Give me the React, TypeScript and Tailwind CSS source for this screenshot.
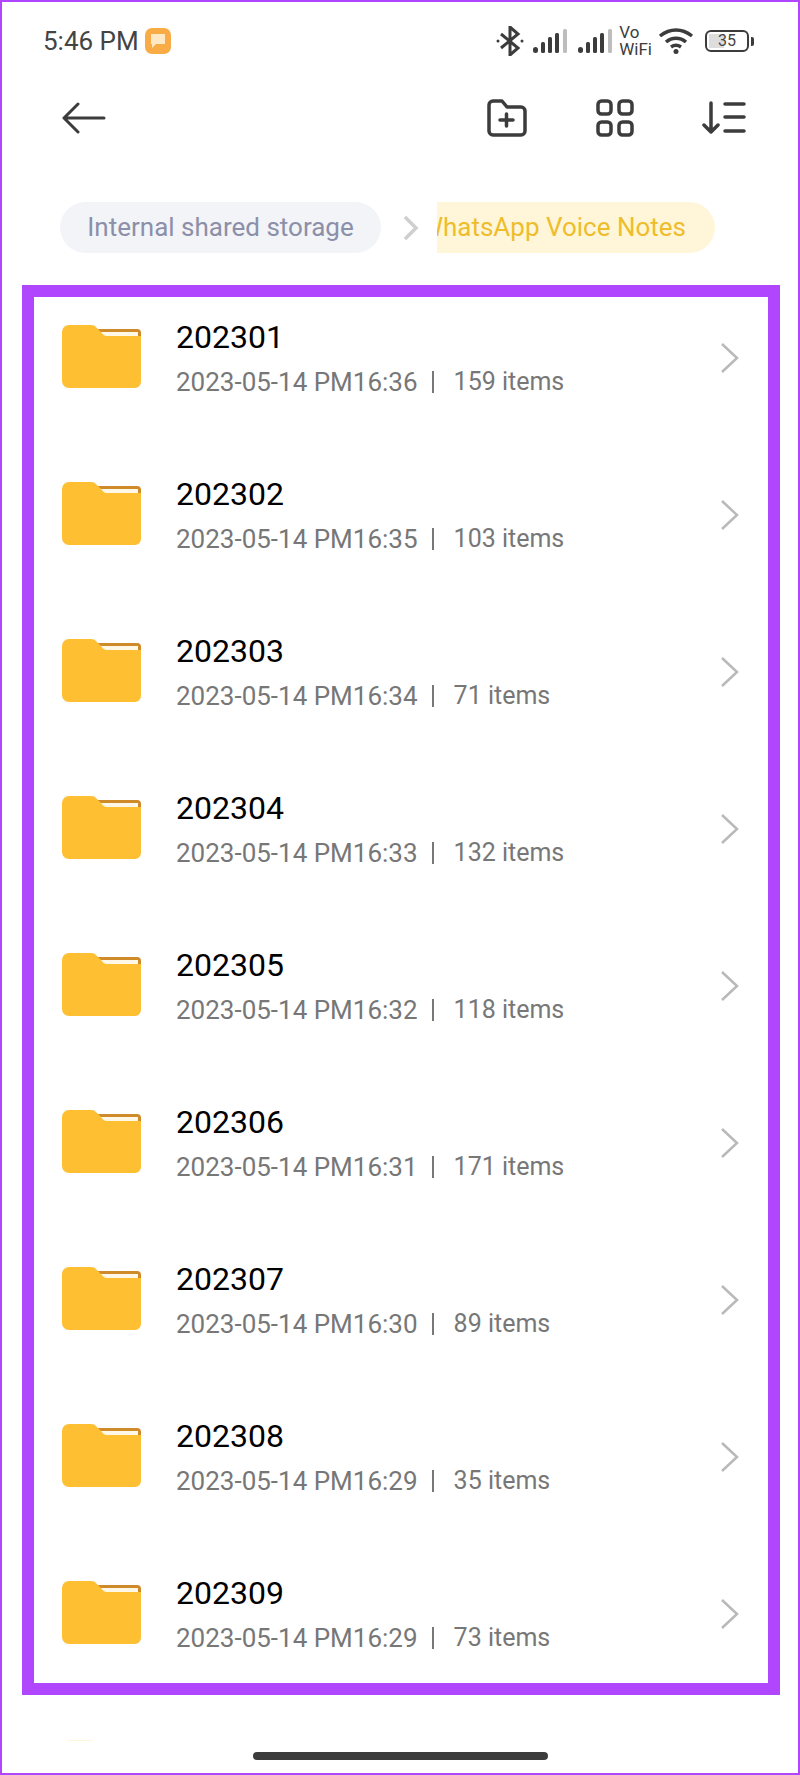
const FOLDERS = [
  { name: "202301", time: "PM16:36", items: "159 items" },
  { name: "202302", time: "PM16:35", items: "103 items" },
  { name: "202303", time: "PM16:34", items: "71 items" },
  { name: "202304", time: "PM16:33", items: "132 items" },
  { name: "202305", time: "PM16:32", items: "118 items" },
  { name: "202306", time: "PM16:31", items: "171 items" },
  { name: "202307", time: "PM16:30", items: "89 items" },
  { name: "202308", time: "PM16:29", items: "35 items" },
  { name: "202309", time: "PM16:29", items: "73 items" },
];

function SignalIcon() {
  return (
    <svg width="36" height="24" viewBox="0 0 36 24">
      <rect x="0" y="18" width="5" height="6" rx="2.500" fill="#3c3c3c" />
      <rect x="8" y="13" width="4" height="11" rx="1.500" fill="#3c3c3c" />
      <rect x="15" y="8" width="4" height="16" rx="1.500" fill="#3c3c3c" />
      <rect x="22" y="4" width="4" height="20" rx="1.500" fill="#3c3c3c" />
      <rect x="30" y="0" width="4" height="24" rx="1.500" fill="#bdbdbd" />
    </svg>
  );
}

function FolderIcon() {
  return (
    <svg width="80" height="64" viewBox="0 0 80 64">
      <path d="M34 4h41a4 4 0 0 1 4 4v16H34z" fill="#cf8a2a" />
      <path d="M38 7h38v12H38z" fill="#fff8e6" />
      <path d="M7 0h22c3 0 4 1 6 3l4 4c1.500 2 3 4 6 4h34v46a6 6 0 0 1-6 6H7a7 7 0 0 1-7-7V7a7 7 0 0 1 7-7z" fill="#fec032" />
    </svg>
  );
}

export default function App() {
  return (
    <div className="w-[800px] h-[1775px] border-2 border-[#b146ff] bg-white overflow-hidden flex flex-col font-['Roboto',sans-serif]">
      {/* status bar */}
      <div className="flex items-center justify-between h-[52px] mt-[13px] pl-[41px] pr-[44px] shrink-0">
        <div className="flex items-center gap-[6px]">
          <span className="text-[26px] leading-none text-[#444444]">5:46 PM</span>
          <div className="w-[26px] h-[26px] rounded-[7px] bg-[#f9ac45] flex items-center justify-center">
            <svg width="14" height="14" viewBox="0 0 14 14">
              <path d="M0 0h14v10H5l-4 4V10H0z" fill="#ffe9c4" />
            </svg>
          </div>
        </div>
        <div className="flex items-center">
          <svg width="28" height="30" viewBox="0 0 28 30" fill="none" stroke="#3c3c3c" strokeWidth="3">
            <path d="M5 8l17 14-8 7V1l8 7L5 22" />
            <circle cx="2" cy="15" r="1.500" fill="#3c3c3c" stroke="none" />
            <circle cx="26" cy="15" r="1.500" fill="#3c3c3c" stroke="none" />
          </svg>
          <div className="ml-[9px]"><SignalIcon /></div>
          <div className="ml-[9px]"><SignalIcon /></div>
          <div className="ml-[5px] flex flex-col text-[#3c3c3c] text-[17px] leading-[17px]">
            <span>Vo</span>
            <span>WiFi</span>
          </div>
          <svg className="ml-[6px]" width="36" height="26" viewBox="0 0 36 26" fill="none" stroke="#3c3c3c" strokeWidth="3.500">
            <path d="M2 8c10-8 22-8 32 0" />
            <path d="M8 14c6-5 14-5 20 0" />
            <path d="M13 19c3-2 7-2 10 0" />
            <circle cx="18" cy="23.500" r="2.500" fill="#3c3c3c" stroke="none" />
          </svg>
          <div className="ml-[11px] flex items-center">
            <div className="w-[44px] h-[22px] rounded-[6px] border-2 border-[#3c3c3c] relative overflow-hidden flex items-center justify-center">
              <div className="absolute left-[2px] top-[2px] bottom-[2px] w-[15px] bg-[#dddddd]" />
              <span className="relative text-[16px] leading-none text-[#444444]">35</span>
            </div>
            <div className="w-[3px] h-[9px] ml-[2px] rounded-r-[2px] bg-[#3c3c3c]" />
          </div>
        </div>
      </div>

      {/* toolbar */}
      <div className="flex items-center justify-between h-[40px] mt-[31px] pl-[60px] pr-[52px] shrink-0">
        <svg width="44" height="32" viewBox="0 0 44 32" fill="none" stroke="#3c3c3c" strokeWidth="3" strokeLinecap="round" strokeLinejoin="round">
          <path d="M2 16h40M16 2L2 16l14 14" />
        </svg>
        <div className="flex items-center">
          <svg width="40" height="38" viewBox="0 0 40 38" fill="none" stroke="#3c3c3c" strokeWidth="3.500" strokeLinecap="round" strokeLinejoin="round">
            <path d="M2 6a4 4 0 0 1 4-4h9l5 6h14a4 4 0 0 1 4 4v20a4 4 0 0 1-4 4H6a4 4 0 0 1-4-4z" />
            <path d="M13 21h13M19.500 15v12" />
          </svg>
          <svg className="ml-[69px]" width="38" height="38" viewBox="0 0 38 38" fill="none" stroke="#3c3c3c" strokeWidth="3.500">
            <rect x="2" y="2" width="13" height="13" rx="3.500" />
            <rect x="23" y="2" width="13" height="13" rx="3.500" />
            <rect x="2" y="23" width="13" height="13" rx="3.500" />
            <rect x="23" y="23" width="13" height="13" rx="3.500" />
          </svg>
          <svg className="ml-[68px]" width="44" height="34" viewBox="0 0 44 34" fill="none" stroke="#3c3c3c" strokeWidth="3.500" strokeLinecap="round" strokeLinejoin="round">
            <path d="M9 2v29M2 24l7 7 7-7M23 3h19M23 16h19M23 30h19" />
          </svg>
        </div>
      </div>

      {/* breadcrumb */}
      <div className="flex items-center h-[51px] mt-[64px] pl-[58px] shrink-0">
        <div className="w-[321px] h-full rounded-full bg-[#f2f4f8] flex items-center justify-center text-[26px] text-[#8c8fa8]">
          Internal shared storage
        </div>
        <svg className="ml-[22px]" width="16" height="26" viewBox="0 0 16 26" fill="none" stroke="#cfcfcf" strokeWidth="3.500">
          <path d="M2 2l11 11L2 24" />
        </svg>
        <div className="ml-[18px] w-[278px] h-full rounded-r-full bg-[#fff6d9] overflow-hidden flex items-center justify-end pr-[29px] whitespace-nowrap text-[26px] text-[#eebd2c]">
          WhatsApp Voice Notes
        </div>
      </div>

      {/* folder list */}
      <div className="ml-[20px] w-[758px] mt-[32px] border-[12px] border-[#b146ff] pt-[18px] pb-[24px] flex flex-col gap-[69px] shrink-0">
        {FOLDERS.map(f => (
          <div key={f.name} className="flex items-center h-[88px] pl-[28px] pr-[28px]">
            <div className="-mt-[5px]">
              <FolderIcon />
            </div>
            <div className="ml-[34px] flex-1">
              <div className="text-[32px] leading-[36px] -mt-[2px] text-black">{f.name}</div>
              <div className="mt-[12px] flex items-center text-[26px] leading-[30px] text-[#777777]">
                <span>2023-05-14 {f.time}</span>
                <span className="ml-[14px] w-[2px] h-[22px] bg-[#777777]" />
                <span className="ml-[20px] text-[25px]">{f.items}</span>
              </div>
            </div>
            <svg className="-mt-[2px]" width="20" height="32" viewBox="0 0 20 32" fill="none" stroke="#b9b9b9" strokeWidth="2.500">
              <path d="M2 2l15 14L2 30" />
            </svg>
          </div>
        ))}
      </div>

      {/* home bar */}
      <div className="flex-1 flex flex-col items-center">
        <div className="self-start ml-[66px] mt-[45px] w-[24px] h-[1px] bg-[#fff6d9]" />
        <div className="mt-[11px] w-[295px] h-[8px] rounded-full bg-[#3c3c3c]" />
      </div>
    </div>
  );
}
